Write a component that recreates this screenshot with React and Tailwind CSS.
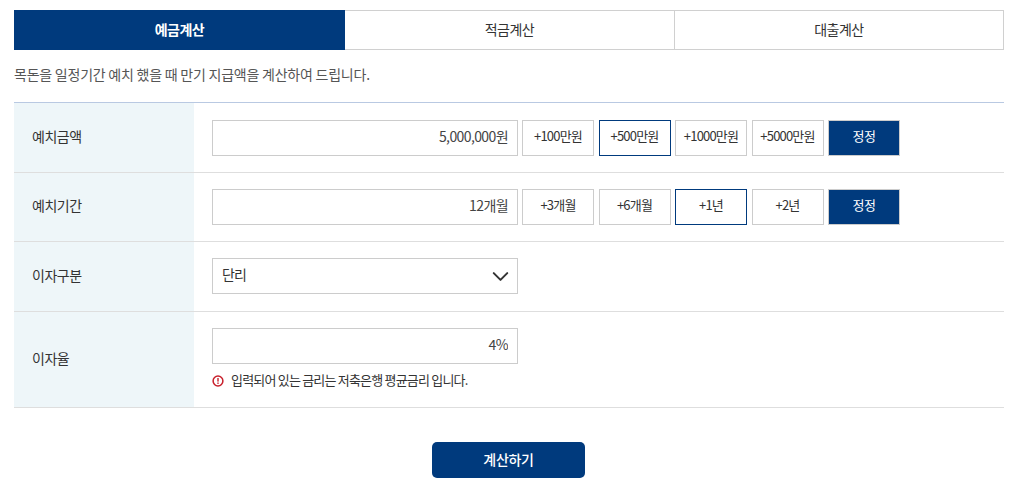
import { ChevronDown } from "lucide-react";

const font = "font-['Noto_Sans_CJK_KR','Noto_Sans',sans-serif]";

const Tab = ({ label, active, className = "" }) => (
  <button
    className={`h-10 pb-[2px] flex items-center justify-center text-sm tracking-[-0.5px] ${
      active
        ? "bg-[#003a7d] text-white font-bold"
        : "bg-white text-[#333] border-y border-r border-[#d0d0d0]"
    } ${className}`}
  >
    {label}
  </button>
);

const Row = ({ label, children, className = "" }) => (
  <div className={`flex border-b border-[#dedede] ${className}`}>
    <div className="w-[180px] shrink-0 bg-[#eef6f9] pl-[18px] pb-1 flex items-center text-sm text-[#333] tracking-[-0.5px]">
      {label}
    </div>
    <div className="flex-1 pl-[18px]">{children}</div>
  </div>
);

const Amount = ({ value }) => (
  <input
    readOnly
    value={value}
    className="w-[306px] h-9 border border-[#ccc] bg-white pl-[10px] pr-[9px] pb-1 text-right text-sm text-[#444] tracking-[-0.6px] outline-none"
  />
);

const Chip = ({ label, active }) => (
  <button
    className={`w-[72px] h-9 pb-1 flex items-center justify-center border bg-white text-[13px] text-[#333] tracking-[-0.8px] ${
      active ? "border-[#003a7d]" : "border-[#ccc]"
    }`}
  >
    {label}
  </button>
);

const Picker = ({ value, chips }) => (
  <div className="flex items-center h-full">
    <Amount value={value} />
    <div className="flex ml-1 gap-[4.5px]">
      {chips.map((c) => (
        <Chip key={c.label} {...c} />
      ))}
      <button className="w-[72px] h-9 pb-1 flex items-center justify-center bg-[#003a7d] border border-[#ccc] text-[13px] text-white tracking-[-0.5px]">
        정정
      </button>
    </div>
  </div>
);

export default function App() {
  return (
    <div className={`${font} min-h-[496px] bg-white px-[14px] pt-[10px] w-[1013px] pr-[9px]`}>
      <div className="grid grid-cols-[331px_330px_329px] border-[#d0d0d0]">
        <Tab label="예금계산" active />
        <Tab label="적금계산" />
        <Tab label="대출계산" />
      </div>

      <p className="mt-[13px] mb-[17px] h-[22px] leading-[22px] text-sm text-[#555] tracking-[-0.23px]">
        목돈을 일정기간 예치 했을 때 만기 지급액을 계산하여 드립니다.
      </p>

      <div className="border-t border-[#b9c9e2]">
        <Row label="예치금액" className="h-[70px]">
          <Picker
            value="5,000,000원"
            chips={[
              { label: "+100만원" },
              { label: "+500만원", active: true },
              { label: "+1000만원" },
              { label: "+5000만원" },
            ]}
          />
        </Row>
        <Row label="예치기간" className="h-[69px]">
          <Picker
            value="12개월"
            chips={[
              { label: "+3개월" },
              { label: "+6개월" },
              { label: "+1년", active: true },
              { label: "+2년" },
            ]}
          />
        </Row>
        <Row label="이자구분" className="h-[70px]">
          <div className="flex items-center h-full pb-[1px]">
            <div className="w-[306px] h-9 border border-[#ccc] bg-white flex items-center justify-between pl-[9px] pr-[3px] pb-1 text-sm text-[#333] tracking-[-1px]">
              <span>단리</span>
              <ChevronDown className="w-[27px] h-[27px] mt-1 text-[#333]" strokeWidth={1.8} />
            </div>
          </div>
        </Row>
        <Row label="이자율" className="h-[96px]">
          <div className="pt-4">
            <Amount value="4%" />
            <div className="mt-[7px] flex items-center gap-[7px] text-[13px] text-[#333] tracking-[-0.8px] leading-[18px]">
              <svg width="12" height="12" viewBox="0 0 12 12" fill="none" className="mt-[1px]">
                <circle cx="6" cy="6" r="4.9" stroke="#c8202c" strokeWidth="1.5" />
                <rect x="5.3" y="3" width="1.4" height="3.6" fill="#c8202c" />
                <rect x="5.3" y="7.5" width="1.4" height="1.4" fill="#c8202c" />
              </svg>
              <span>입력되어 있는 금리는 저축은행 평균금리 입니다.</span>
            </div>
          </div>
        </Row>
      </div>

      <div className="mt-[34px] flex justify-center pr-[1px]">
        <button className="w-[153px] h-9 pb-[2px] rounded-[5px] bg-[#003a7d] text-white text-sm font-medium tracking-[-0.3px]">
          계산하기
        </button>
      </div>
    </div>
  );
}
